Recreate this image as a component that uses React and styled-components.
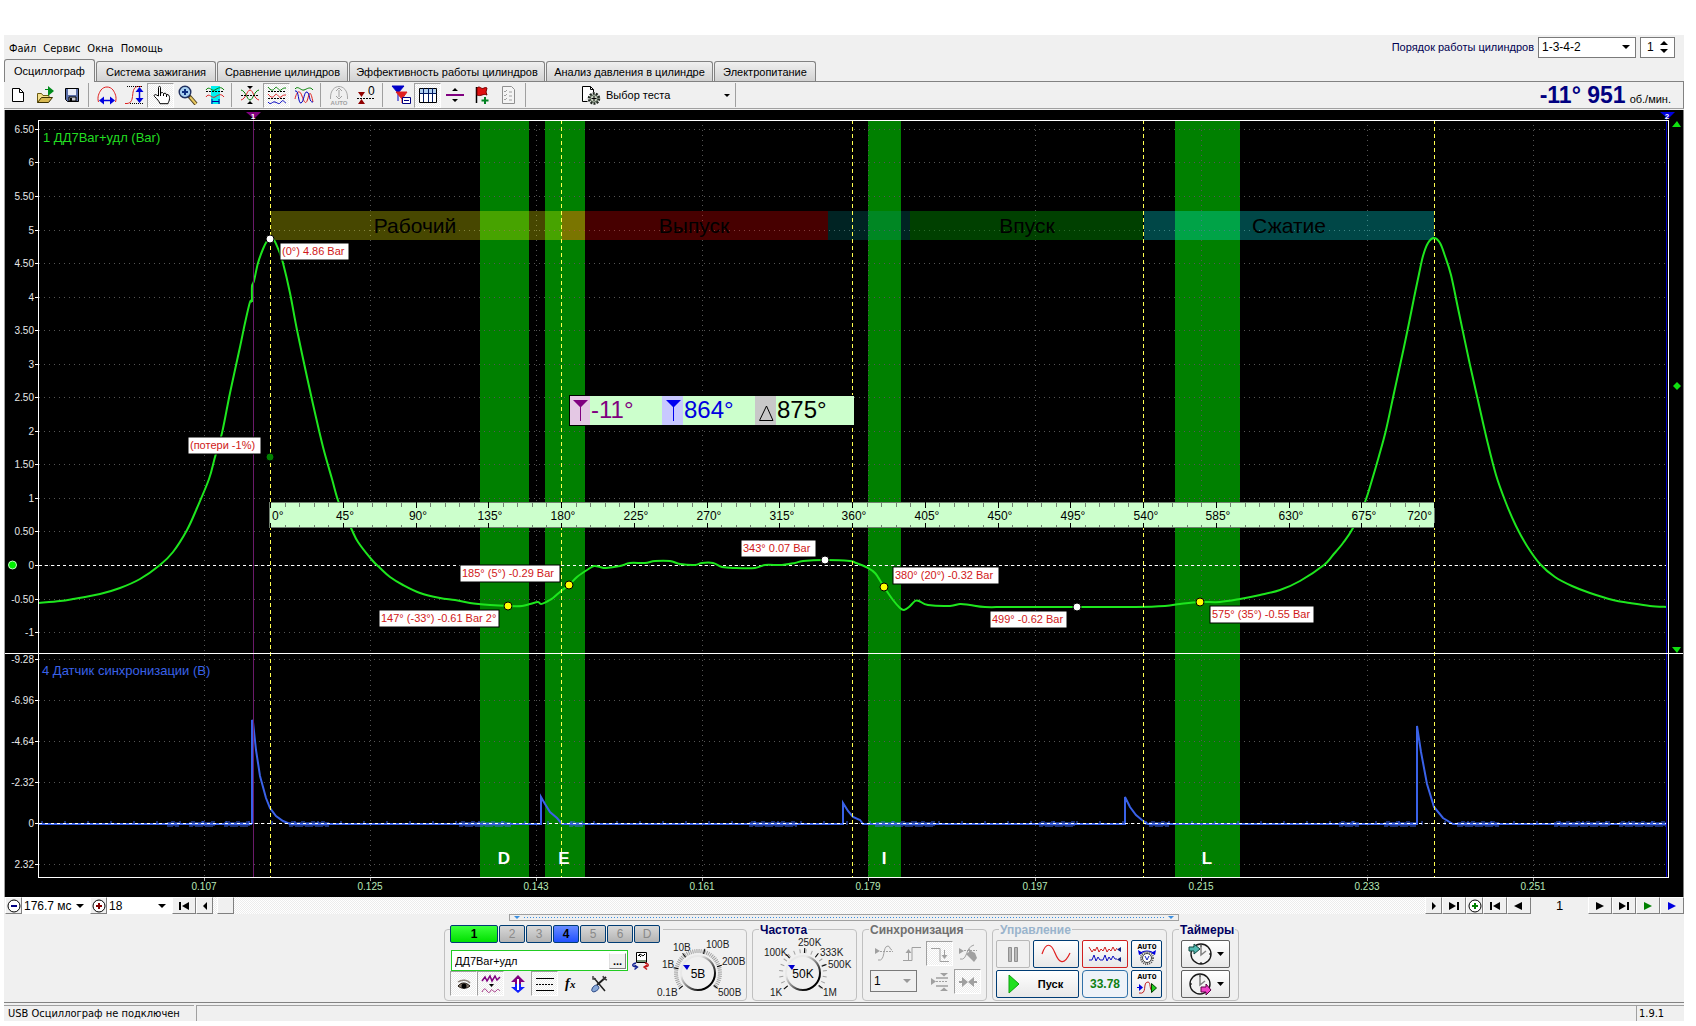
// src/pages/Oscilloscope.jsx
import React from "react";
import styled, { createGlobalStyle, css } from "styled-components";

const UI = `"Liberation Sans", Arial, sans-serif`;
const TAHOMA = `"DejaVu Sans Condensed", "DejaVu Sans", sans-serif`;

// -------- Global --------

const GlobalStyle = createGlobalStyle`
  * { box-sizing: border-box; }
  body {
    margin: 0;
    background: #fff;
    font-family: ${UI};
    font-size: 11px;
    color: #000;
  }
  button, input, select { font: inherit; color: inherit; margin: 0; }
`;

// -------- Styled Components --------

const Page = styled.div`
  padding: 35px 12px 5px 4px;
`;

const Frame = styled.main`
  display: flex;
  flex-direction: column;
  background: #f0f0f0;
`;

const checker = css`
  background: repeating-conic-gradient(#fff 0 25%, #ececec 0 50%) 0 0 / 2px 2px;
`;

const MenuRow = styled.header`
  display: flex;
  justify-content: space-between;
  height: 24px;
  padding: 0 9px 0 5px;
`;

const Menu = styled.nav`
  display: flex;
  align-items: center;
  gap: 7px;
  font-family: ${TAHOMA};
  font-size: 11px;
`;

const MenuItem = styled.button`
  border: 0;
  padding: 3px 0 0;
  background: none;
`;

const Order = styled.div`
  display: flex;
  align-items: center;
  gap: 4px;
  color: #000050;
`;

const ComboWrap = styled.div`
  position: relative;
  width: ${(p) => p.$w}px;
  height: ${(p) => p.$h || 21}px;
  &::after {
    content: "";
    position: absolute;
    right: 6px;
    top: calc(50% - 2px);
    border: 4px solid transparent;
    border-top-color: ${(p) => (p.$muted ? "#999" : "#000")};
    border-bottom: 0;
    pointer-events: none;
  }
`;

const Combo = styled.select`
  appearance: none;
  width: 100%;
  height: 100%;
  padding: ${(p) => (p.$flat ? "0 2px" : "0 3px 1px")};
  border: ${(p) => (p.$flat ? "0" : "1px solid #7a7a7a")};
  border-radius: 0;
  background: ${(p) => (p.$muted ? "#f0f0f0" : "#fff")};
  color: #000;
  opacity: 1;
  font-size: 12px;
`;

const Spin = styled.div`
  display: flex;
  align-items: center;
  width: 35px;
  height: 21px;
  border: 1px solid #7a7a7a;
  background: #fff;
`;

const SpinInput = styled.input`
  width: 18px;
  border: 0;
  padding: 0 0 0 6px;
  background: none;
  color: #000;
  font-size: 12px;
`;

const Tabs = styled.div`
  display: flex;
  align-items: flex-end;
  gap: 1px;
  height: 23px;
  border-bottom: 1px solid #828282;
`;

const Tab = styled.button`
  height: ${(p) => (p.$active ? 23 : 20)}px;
  margin-bottom: ${(p) => (p.$active ? -1 : 0)}px;
  width: ${(p) => p.$w}px;
  padding: 0;
  white-space: nowrap;
  border: 1px solid #828282;
  border-bottom: 0;
  border-radius: 3px 3px 0 0;
  background: ${(p) => (p.$active ? "#f0f0f0" : "linear-gradient(#f0f0f0, #d2d2d2)")};
`;

const Toolbar = styled.div`
  display: flex;
  align-items: center;
  height: 27px;
  border-bottom: 1px solid #a0a0a0;
  border-right: 1px solid #828282;
  margin-bottom: 1px;
`;

const Tool = styled.button`
  display: flex;
  align-items: center;
  justify-content: center;
  width: 27px;
  height: 25px;
  padding: 0;
  border: 1px solid transparent;
  background: none;
  ${(p) =>
    p.$pressed &&
    css`
      ${checker}
      border-color: #a0a0a0 #fff #fff #a0a0a0;
    `}
`;

const Sep = styled.span`
  width: 2px;
  height: 24px;
  margin: 0 3px;
  border-left: 1px solid #a0a0a0;
`;

const TestPick = styled.button`
  display: flex;
  align-items: center;
  gap: 5px;
  width: 151px;
  margin-left: 51px;
  padding: 0;
  border: 0;
  background: none;
`;

const Caret = styled.span`
  margin-left: auto;
  margin-right: 2px;
  border: 3px solid transparent;
  border-top-color: #000;
  border-bottom: 0;
`;

const Rpm = styled.div`
  display: flex;
  align-items: baseline;
  gap: 4px;
  margin-left: auto;
  padding-right: 12px;
`;

const RpmValue = styled.strong`
  font-size: 23px;
  line-height: 26px;
  color: #000080;
`;

const Scope = styled.svg`
  display: block;
  width: 100%;
  height: auto;
  background: #000;
  border-right: 1px solid #828282;
  border-left: 1px solid #a0a0a0;
`;

const ScrollRow = styled.div`
  display: flex;
  height: 17px;
  padding-left: 1px;
  font-size: 13px;
`;

const Track = styled.div`
  flex: 1;
  display: flex;
  gap: 4px;
  ${checker}
`;

const Nav = styled.button`
  display: flex;
  align-items: center;
  justify-content: center;
  width: ${(p) => p.$w || 24}px;
  height: 17px;
  padding: 0;
  border: 1px solid;
  border-color: #fff #808080 #808080 #fff;
  background: #f0f0f0;
`;

const PageNo = styled.output`
  width: 57px;
  text-align: center;
  line-height: 17px;
`;

const Splitter = styled.div`
  display: flex;
  align-items: center;
  align-self: center;
  width: 670px;
  height: 7px;
  padding: 0 4px;
  border: 1px solid #a0a0a0;
`;

const SplitDots = styled.span`
  flex: 1;
  margin: 0 4px;
  height: 1px;
  background: repeating-linear-gradient(90deg, #3a8ee0 0 1px, transparent 1px 3px);
`;

const SplitArrow = styled.span`
  border: 3px solid transparent;
  border-top-color: #3a8ee0;
  border-bottom: 0;
`;

const Deck = styled.section`
  display: flex;
  justify-content: center;
  gap: 5px;
  padding: 8px 5px 1px 0;
`;

const Group = styled.fieldset`
  position: relative;
  width: ${(p) => p.$w}px;
  height: 72px;
  min-width: 0;
  margin: 0;
  padding: 0;
  border: 1px solid #c0c0c0;
  border-radius: 4px;
`;

const Title = styled.legend`
  position: absolute;
  top: -8px;
  left: 6px;
  padding: 0 1px;
  background: #f0f0f0;
  font-weight: bold;
  font-size: 12px;
  line-height: 16px;
  color: ${(p) => p.$c};
`;

const Row = styled.div`
  display: flex;
  align-items: ${(p) => (p.$top ? "flex-start" : "center")};
  gap: ${(p) => p.$gap || 0}px;
`;

const ChannelSide = styled.div`
  display: flex;
  flex-direction: column;
  width: 211px;
  padding-left: 5px;
`;

const Channels = styled(Row)`
  width: 213px;
  height: 25px;
  margin-top: -5px;
  padding-bottom: 7px;
  background: #f0f0f0;
`;

const channelColor = {
  on: "linear-gradient(#3cff3c, #00e000)",
  sel: "linear-gradient(#6a8cff, #2050ff)",
  off: "linear-gradient(#d8d8d8, #b4b4b4)",
};

const Channel = styled.button`
  width: ${(p) => (p.$state === "on" ? 48 : 26)}px;
  height: 18px;
  padding: 0;
  border: 1px solid #003c74;
  border-radius: 2px;
  background: ${(p) => channelColor[p.$state]};
  color: ${(p) => (p.$state === "off" ? "#8a8a8a" : "#000")};
  font-weight: ${(p) => (p.$state === "off" ? "normal" : "bold")};
  font-size: 12px;
`;

const SensorBox = styled.div`
  display: flex;
  align-items: center;
  width: 177px;
  height: 21px;
  margin-left: 1px;
  padding-right: 1px;
  border: 1px solid #22cc22;
  background: #fff;
`;

const SensorInput = styled.input`
  flex: 1;
  min-width: 0;
  border: 0;
  padding: 0 3px;
  background: none;
`;

const Small = styled.button`
  width: 17px;
  height: 16px;
  padding: 0;
  border: 1px solid;
  border-color: #fff #808080 #808080 #e0e0e0;
  background: #f0f0f0;
  line-height: 6px;
  font-weight: bold;
`;

const KnobArt = styled.svg`
  display: block;
  font-size: 10px;
`;

const SyncGrid = styled.div`
  display: grid;
  grid-template-columns: repeat(4, 28px);
  row-gap: 3px;
  padding: 11px 0 0 7px;
`;

const SyncCombo = styled(ComboWrap)`
  grid-column: span 2;
  margin-top: 1px;
`;

const ControlGrid = styled.div`
  display: grid;
  grid-template-columns: 34px 46px 46px 31px;
  gap: 2px 3px;
  padding: 10px 0 0 3px;
`;

const borders = { blue: "#003c74", red: "#d02020", off: "#b8b8b8", gray: "#606060" };

const Cmd = styled.button`
  display: flex;
  align-items: center;
  justify-content: center;
  height: 28px;
  padding: 0;
  border: 1px solid ${(p) => borders[p.$tone || "blue"]};
  border-radius: 2px;
  background: ${(p) => (p.$tone === "off" ? "#f0f0f0" : "linear-gradient(#fff, #e8e8e8)")};
`;

const StartCmd = styled(Cmd)`
  grid-column: span 2;
  gap: 18px;
  padding-right: 4px;
  font-weight: bold;
`;

const Rate = styled.output`
  display: flex;
  align-items: center;
  justify-content: center;
  height: 28px;
  border: 1px solid #3070a8;
  border-radius: 4px;
  background: #eef2f8;
  color: #108010;
  font-weight: bold;
  font-size: 12px;
`;

const Timers = styled.div`
  display: flex;
  flex-direction: column;
  gap: 2px;
  width: 57px;
  padding: 10px 0 0 8px;
`;

const TimerCmd = styled(Cmd)`
  gap: 5px;
`;

const Status = styled.footer`
  display: flex;
  height: 19px;
  border-top: 1px solid #828282;
  padding-top: 2px;
  font-family: ${TAHOMA};
  font-size: 11px;
  line-height: 16px;
`;

const StatusCell = styled.span`
  width: ${(p) => p.$w}px;
  padding-left: ${(p) => (p.$line ? 2 : 4)}px;
  border-top: 1px solid #a0a0a0;
  ${(p) => p.$grow && "flex: 1; border-left: 1px solid #a0a0a0; margin-left: 2px;"}
  ${(p) => p.$line && "border-left: 1px solid #a0a0a0;"}
`;

// -------- Icons --------

function Ico({ children, w = 20, h = 20 }) {
  return (
    <svg width={w} height={h} viewBox={`0 0 ${w} ${h}`} fill="none" aria-hidden="true">
      {children}
    </svg>
  );
}

const icons = {
  fresh: (
    <Ico>
      <path d="M4.500 3.500h7l4 4v9h-11z" fill="#fff" stroke="#000" />
      <path d="M11.500 3.500v4h4" stroke="#000" />
    </Ico>
  ),
  open: (
    <Ico>
      <path d="M2.500 17.500v-9h4l1.500 2h6v3" fill="#f4e08c" stroke="#6b5a10" />
      <path d="M2.500 17.500l4-5h11l-4 5z" fill="#d8b850" stroke="#3a3000" />
      <path d="M13 1l6 5-6 5z" fill="#008a1c" />
      <path d="M10 4.500h3" stroke="#008a1c" />
    </Ico>
  ),
  save: (
    <Ico>
      <path d="M3.500 3.500h13v13h-11l-2-2z" fill="#5a6ea8" stroke="#000" />
      <path d="M6 4h8v6H6z" fill="#e8ecf8" />
      <path d="M7 12h7v4H7z" fill="#c8c8d0" stroke="#000" />
      <path d="M8 13h2v3H8z" fill="#000" />
    </Ico>
  ),
  arch: (
    <Ico>
      <path d="M1.500 17C0 12 2 8 4 5c3-4 9-4 12 0 2 3 4 7 2.500 12" stroke="#e02020" />
      <path d="M5 15.500h10" stroke="#0000e0" strokeWidth="1.500" />
      <path d="M2 15.500l5-4v8zM18 15.500l-5-4v8z" fill="#0000e0" />
    </Ico>
  ),
  rise: (
    <Ico>
      <path d="M1 18.500c12 1 4-14 12-17h5" stroke="#e02020" />
      <path d="M3 1.500h16M6 18.500h13" stroke="#000" strokeDasharray="1 1" />
      <path d="M15.500 5v10" stroke="#0000e0" strokeWidth="1.500" />
      <path d="M15.500 2l4 5h-8zM15.500 18l4-5h-8z" fill="#0000e0" />
    </Ico>
  ),
  hand: (
    <Ico>
      <path
        d="M7.500 11V2.500c0-1.500 2-1.500 2 0V8l2-.5 1 1 2-.3.700 1.300 1.800.2c1.500.8 1.500 2 1.500 4 0 2-1 3-1.500 5h-8C8 16 6 14 3.500 11.500c-1-1.500.5-2.500 2-1.500z"
        fill="#fff"
        stroke="#000"
      />
      <path d="M9.500 8v3M12.500 9v2M15.500 10v2" stroke="#000" />
    </Ico>
  ),
  zoom: (
    <Ico>
      <path d="M11 11l7 8" stroke="#504020" strokeWidth="4" />
      <path d="M12 12l6 7" stroke="#e8c860" strokeWidth="2" />
      <circle cx="7" cy="7" r="5.800" fill="#a8d0f0" stroke="#203060" strokeWidth="1.400" />
      <path d="M7 4v6M4 7h6" stroke="#103080" strokeWidth="2" />
    </Ico>
  ),
  fit: (
    <Ico>
      <path d="M6 1h9v18H6z" fill="#00f0f0" />
      <path d="M1 5c3-5 6 2 9 0s6-4 9 0" stroke="#008000" />
      <path d="M1 6.500h18" stroke="#000" strokeDasharray="2 1" />
      <path d="M1 12c3-5 6 2 9 0s6-4 9 0" stroke="#e02020" />
      <path d="M7 16.500h7M7 14v5M14 14v5" stroke="#0000a0" />
    </Ico>
  ),
  cross: (
    <Ico>
      <path d="M1 5c5 1 6 10 9 10s4-9 9-10" stroke="#008000" />
      <path d="M1 15c5-1 6-10 9-10s4 9 9 10" stroke="#e02020" />
      <path d="M1 10.500h18" stroke="#000" strokeDasharray="2 1" />
      <path d="M7 1h6l-3 3zM7 19h6l-3-3z" fill="#000" />
    </Ico>
  ),
  split: (
    <Ico>
      <path d="M1 2c3 4 5 4 7 1s4 4 6 2 3-2 5-2" stroke="#008000" />
      <path d="M1 6.500h18M1 13.500h18" stroke="#000" strokeDasharray="2 1" />
      <path d="M1 9c3 4 5 4 7 1s4 4 6 2 3-2 5-2" stroke="#e02020" />
      <path d="M1 17c3 4 4-1 7 0s4 3 6 0 3 0 5 1" stroke="#0000c0" />
    </Ico>
  ),
  overlay: (
    <Ico>
      <path d="M1 4c3-4 6 2 9 1s6-4 9 0" stroke="#008000" />
      <path d="M1 14C3 5 6 5 8 11s4 10 6 2 3-5 5 4" stroke="#e02020" />
      <path d="M1 6c4-2 3 13 6 12S10 6 13 7s2 11 6 10" stroke="#0000c0" />
    </Ico>
  ),
  auto: (
    <Ico>
      <path d="M1.500 14C1 5 6 1.500 10 1.500S19 5 18.500 14" stroke="#a8a8a8" />
      <path d="M10 5v7M7 6l3-3 3 3M7 11l3 3 3-3" stroke="#a0a0a0" />
      <text x="10" y="20" textAnchor="middle" fontSize="6" fontWeight="bold" fill="#a0a0a0">AUTO</text>
    </Ico>
  ),
  zero: (
    <Ico>
      <path d="M2 7h7l-3.500 5zM2 19h7l-3.500-5z" fill="#900000" />
      <path d="M1 13.500h18" stroke="#000" strokeDasharray="2 1" />
      <text x="12" y="10" fontSize="12" fill="#000">0</text>
    </Ico>
  ),
  markers: (
    <Ico>
      <path d="M1 1h12L7 8zM7 7v9" fill="#0000c8" stroke="#0000c8" />
      <path d="M5 7h11l-5 7zM11 13v5" fill="#e02020" stroke="#e02020" />
      <path d="M11.500 12.500h8v6h-8z" fill="#fff" stroke="#000080" />
      <path d="M13 15.500h5" stroke="#000080" />
    </Ico>
  ),
  grid: (
    <Ico>
      <path d="M1.500 3.500h17v14h-17z" fill="#fff" stroke="#000" />
      <path d="M2 4h16v4H2z" fill="#b0d0f0" />
      <path d="M1.500 8.500h17M5.500 3v14M10.500 3v14M14.500 3v14" stroke="#001860" />
    </Ico>
  ),
  level: (
    <Ico>
      <path d="M1 10h18" stroke="#800080" strokeWidth="2" />
      <path d="M7 6h6l-3-3zM7 14h6l-3 3z" fill="#000" />
    </Ico>
  ),
  flag: (
    <Ico>
      <path d="M4.500 2v16" stroke="#000" strokeWidth="1.500" />
      <path d="M5 3c3-3 4 2 7 0 2-1 3 0 3 0l-1 4 1 3c-4-2-6 2-10 0z" fill="#e01010" stroke="#700" />
      <path d="M13 12v7M9.500 15.500h7" stroke="#008020" strokeWidth="2" />
    </Ico>
  ),
  list: (
    <Ico>
      <path d="M3.500 1.500h9l3 3v14h-12z" fill="#f4f4f4" stroke="#909090" />
      <path d="M5 6l1 1 2-2M5 10l1 1 2-2M5 14l1 1 2-2M10 7h3M10 11h3M10 15h3" stroke="#a0a0a0" />
    </Ico>
  ),
  test: (
    <Ico>
      <path d="M1.500 16.500v-15h8l3 3v3M1.500 16.500h5" fill="#fff" stroke="#000" />
      <path d="M9.500 1.500v3h3" stroke="#000" />
      <circle cx="13" cy="13.500" r="5" stroke="#202820" strokeWidth="2.500" strokeDasharray="2 1.100" />
      <circle cx="13" cy="13.500" r="3.800" fill="#c8d0c0" stroke="#405040" />
      <path d="M13 11v5M10.500 13.500h5" stroke="#000" />
    </Ico>
  ),
  swap: (
    <Ico>
      <path d="M5.500 1.500h10v10h-10z" fill="#fff" stroke="#000" />
      <path d="M6 9h9v2H6z" fill="#7a9a7a" />
      <path d="M7 5l2-2 3 2 2-2M10 6l-2-2" stroke="#000" />
      <path d="M5 12c-5 1-4 4 1 4M3.500 14l3 2-3 2.500" stroke="#102090" strokeWidth="1.400" />
      <path d="M14 12c5 1 4 4-1 4M16 14l-3 2 3 2.500" stroke="#c01818" strokeWidth="1.400" />
    </Ico>
  ),
  eye: (
    <Ico>
      <path d="M4 8c4-3 10-2 12 1" stroke="#8a8078" strokeWidth="1.500" />
      <path d="M4 12c3-4 8-4 12 0-3 3-9 3-12 0z" fill="#807468" stroke="#201810" />
      <circle cx="10" cy="12" r="2.500" fill="#000" />
    </Ico>
  ),
  noise: (
    <Ico>
      <path d="M1 7l3-4 2 4 3-5 2 5 3-5 2 4 3-3" stroke="#800080" strokeWidth="1.500" />
      <path d="M8 10h5l-2.500 3z" fill="#000" />
      <path d="M1 18c2-4 3-4 5-1s3 1 4-1 3 4 5 1 3-1 4 0" stroke="#a03080" />
    </Ico>
  ),
  updown: (
    <Ico>
      <path d="M10 1l7 7h-4v3H7V8H3z" fill="#800080" />
      <path d="M10 19l7-6h-4v-3H7v3H3z" fill="#1020ff" />
      <path d="M10 5v11" stroke="#fff" strokeWidth="2" />
    </Ico>
  ),
  lines: (
    <Ico>
      <path d="M1 4.500h18M1 16.500h18" stroke="#000" />
      <path d="M1 10.500h18" stroke="#000" strokeDasharray="2 1" />
    </Ico>
  ),
  fx: (
    <Ico>
      <text x="3" y="14" fontSize="14" fontStyle="italic" fontWeight="bold" fontFamily="Liberation Serif" fill="#000">f</text>
      <text x="8" y="14" fontSize="11" fontStyle="italic" fontWeight="bold" fontFamily="Liberation Serif" fill="#000">x</text>
    </Ico>
  ),
  tools: (
    <Ico>
      <path d="M5 4l11 13" stroke="#202020" strokeWidth="1.500" />
      <path d="M17 3l-9 8" stroke="#202020" strokeWidth="2" />
      <path d="M4 2v3h3M14 2l1 3 3 1" stroke="#404040" strokeWidth="1.500" />
      <path d="M3 15c1-3 4-5 6-3s0 4-2 5c-3 2-5 0-4-2z" fill="#88a8d8" stroke="#204080" />
    </Ico>
  ),
  trigWave: (
    <Ico>
      <path d="M1 4v6l5-3z" fill="#a0a0a0" />
      <path d="M6 7.500h13" stroke="#a0a0a0" strokeDasharray="2 1" />
      <path d="M4 16c8 2 4-14 10-14 2 0 2 4 4 4" stroke="#a0a0a0" />
    </Ico>
  ),
  trigRise: (
    <Ico>
      <path d="M1 16.500h9v-13h9" stroke="#a0a0a0" />
      <path d="M6.500 16V8" stroke="#a0a0a0" />
      <path d="M3.500 9h6l-3-4z" fill="#a0a0a0" />
    </Ico>
  ),
  trigFall: (
    <Ico>
      <path d="M1 4.500h9v13h9" stroke="#a0a0a0" />
      <path d="M14.500 6v6" stroke="#a0a0a0" />
      <path d="M11.500 11h6l-3 4z" fill="#a0a0a0" />
    </Ico>
  ),
  trigHand: (
    <Ico>
      <path d="M1 4v6l5-3z" fill="#a0a0a0" />
      <path d="M6 6.500h13" stroke="#a0a0a0" strokeDasharray="2 1" />
      <path d="M2 15c8 2 5-12 14-14" stroke="#a0a0a0" />
      <path d="M8 10l3-2V4l2 3 4 2 2 5-3 4z" fill="#a0a0a0" />
    </Ico>
  ),
  trigGap: (
    <Ico>
      <path d="M1 6v7l5-3.500zM10 1h8l-4 3.500zM10 19h8l-4-3.500z" fill="#a0a0a0" />
      <path d="M6 6h12M6 14h12" stroke="#a0a0a0" strokeWidth="1.500" />
      <path d="M6 9.500h12" stroke="#a0a0a0" strokeDasharray="2 1" />
    </Ico>
  ),
  trigIn: (
    <Ico>
      <path d="M1 10h5M14 10h5" stroke="#a0a0a0" strokeWidth="2" />
      <path d="M4 5l6 5-6 5zM16 5l-6 5 6 5z" fill="#a0a0a0" />
    </Ico>
  ),
  pause: (
    <Ico>
      <path d="M5.500 3.500h3v14h-3zM11.500 3.500h3v14h-3z" fill="#b8b8b8" stroke="#909090" />
    </Ico>
  ),
  sine: (
    <Ico w={30} h={20}>
      <path d="M1 10C5-2 10-1 14 9s9 13 15 0" stroke="#e02020" strokeWidth="1.200" />
    </Ico>
  ),
  traces: (
    <Ico w={34} h={20}>
      <path d="M1 3l3 5 2-3 1 2 2-4 2 5 2-3 2 2 2-4 2 5 2-3 2 2 2-4 2 4 2-3" stroke="#d02020" />
      <path d="M1 16h3l2-5 2 6 2-4 2 3h3l2-5 2 6 2-4 2 3 2-4 2 3h2" stroke="#1010c0" />
      <path d="M33 3v5l-4-2.500zM33 13v5l-4-2.500z" fill="#102080" />
    </Ico>
  ),
  autoDial: (
    <Ico w={22} h={24}>
      <text x="11" y="7" textAnchor="middle" fontSize="8" fontFamily="Liberation Mono" fontWeight="bold" fill="#000">AUTO</text>
      <path d="M4 12c3-4 11-4 14 0" stroke="#0000e0" strokeWidth="1.200" />
      <path d="M2 8l5 3-4 2zM20 8l-5 3 4 2z" fill="#0000e0" />
      <circle cx="11" cy="16" r="6" stroke="#505050" strokeWidth="2" strokeDasharray="1 1" />
      <circle cx="11" cy="16" r="4.500" fill="#fff" stroke="#404040" />
      <path d="M9 14l2 4 2-4" stroke="#1020c0" />
    </Ico>
  ),
  autoSync: (
    <Ico w={22} h={24}>
      <text x="11" y="7" textAnchor="middle" fontSize="8" fontFamily="Liberation Mono" fontWeight="bold" fill="#000">AUTO</text>
      <path d="M1 15.500h3" stroke="#0000e0" />
      <path d="M3 12v7l4-3.500z" fill="#0000e0" />
      <path d="M3 21c9 2 3-11 9-11 3 0 1 8 5 10" stroke="#c02020" />
      <path d="M15.500 11.500v9l5-4.500z" fill="#20d020" stroke="#004000" />
    </Ico>
  ),
  timerIn: (
    <Ico w={24} h={24}>
      <circle cx="13" cy="12" r="10" fill="#f4f4f4" stroke="#181818" strokeWidth="1.400" />
      <path d="M13 5v8l5-4" stroke="#808080" strokeWidth="1.500" />
      <path d="M13 3v2M13 20v2M21 12h2" stroke="#000" />
      <path d="M1 5h5V2l6 5-6 5V9H1z" fill="#50b8b0" stroke="#104840" />
    </Ico>
  ),
  timerOut: (
    <Ico w={24} h={24}>
      <circle cx="12" cy="12" r="10" fill="#f4f4f4" stroke="#181818" strokeWidth="1.400" />
      <path d="M12 5v8l5-4" stroke="#808080" strokeWidth="1.500" />
      <path d="M12 3v2M2 12h2" stroke="#000" />
      <path d="M13 15h5v-3l5 6-5 5v-3h-5z" fill="#f040c8" stroke="#600048" />
    </Ico>
  ),
};

function NavIcon({ kind, color = "#000" }) {
  const shapes = {
    play: <path d="M1 1v8l8-4z" fill={color} />,
    back: <path d="M8 1v8L0 5z" fill={color} />,
    small: <path d="M3 1v8l4-4z" fill={color} />,
    smallBack: <path d="M7 1v8L3 5z" fill={color} />,
    first: <path d="M10 1v8L3 5zM0 1h2v8H0z" fill={color} />,
    last: <path d="M0 1v8l7-4zM8 1h2v8H8z" fill={color} />,
  };
  return (
    <Ico w={10} h={10}>
      {shapes[kind]}
    </Ico>
  );
}

function ZoomDot({ plus, color }) {
  return (
    <Ico w={14} h={14}>
      <circle cx="7" cy="7" r="6" fill="#fff" stroke="#000" />
      <path d={plus ? "M7 4v6M4 7h6" : "M4 7h6"} stroke={color} strokeWidth="2" />
    </Ico>
  );
}

// -------- Scope data --------

// the trace has a small jump at the cylinder mark, so it is drawn as two runs
const PRESSURE = [
  [
    [39, 603], [60, 601], [73, 599], [100, 594], [120, 588], [140, 579], [160, 565], [173, 552], [187, 530],
    [197, 508], [209, 479], [215, 457], [222, 433], [230, 393], [240, 347], [245, 323], [250, 302], [252, 302],
  ],
  [
    [252, 302], [252, 286], [254, 281], [258, 263], [263, 249], [267, 241], [270, 238], [274, 240], [279, 251],
    [283, 263], [290, 293], [297, 330], [307, 377], [315, 413], [323, 447], [332, 479], [339, 503], [351, 528],
    [358, 542], [372, 560], [380, 568], [390, 577], [403, 585], [420, 593], [440, 598], [455, 600], [470, 603],
    [490, 605], [508, 606], [522, 606], [530, 604], [538, 602], [541, 604], [548, 601], [553, 598], [561, 591],
    [569, 585], [577, 577], [587, 570], [594, 566], [600, 567], [606, 568], [620, 566], [630, 563], [645, 563],
    [655, 561], [670, 561], [680, 564], [695, 565], [702, 563], [713, 563], [722, 567], [735, 568], [755, 568],
    [765, 565], [782, 565], [795, 563], [803, 561], [825, 560], [850, 561], [856, 563], [866, 567], [875, 573],
    [884, 587], [893, 600], [900, 608], [904, 610], [909, 607], [915, 601], [919, 601], [928, 605], [950, 606],
    [960, 604], [970, 605], [985, 607], [1010, 607], [1077, 607], [1135, 607], [1165, 606], [1180, 604],
    [1200, 602], [1220, 602], [1240, 599], [1260, 595], [1280, 590], [1300, 581], [1324, 565], [1333, 555],
    [1343, 543], [1353, 528], [1365, 502], [1372, 480], [1379, 456], [1386, 430], [1394, 393], [1404, 347],
    [1409, 323], [1414, 298], [1419, 274], [1423, 256], [1428, 243], [1434, 238], [1440, 243], [1445, 256],
    [1451, 275], [1459, 313], [1470, 365], [1479, 405], [1487, 440], [1496, 475], [1506, 503], [1516, 526],
    [1527, 546], [1540, 564], [1555, 577], [1572, 586], [1590, 593], [1613, 600], [1630, 603], [1650, 606],
    [1667, 607],
  ],
];

const SYNC = [
  [252, 824], [252, 720], [253, 722], [256, 750], [260, 776], [266, 798], [270, 808], [276, 816], [283, 821],
  [290, 824], [541, 824], [541, 797], [545, 804], [550, 812], [557, 818], [562, 824], [843, 824], [843, 803],
  [848, 811], [853, 817], [860, 820], [863, 824], [1125, 824], [1125, 797], [1130, 807], [1136, 815],
  [1142, 820], [1148, 824], [1417, 824], [1417, 726], [1421, 752], [1427, 784], [1434, 807], [1443, 818],
  [1453, 824], [1667, 824],
];

const NOISY = [
  [168, 180], [190, 215], [225, 251], [290, 330], [460, 512], [570, 583], [750, 798], [876, 935],
  [1040, 1075], [1150, 1170], [1340, 1360], [1385, 1417], [1458, 1500], [1555, 1610], [1620, 1667],
];

const RAW_STEPS = Array.from({ length: 16 }, (_, i) => 6.5 - i * 0.5);
const CYCLES = [270, 561, 852, 1143, 1434];
const TIMES = ["0.107", "0.125", "0.143", "0.161", "0.179", "0.197", "0.215", "0.233", "0.251"];
const LOW = [["-9.28", 659], ["-6.96", 700], ["-4.64", 741], ["-2.32", 782], ["0", 823], ["2.32", 864]];
const ZONES = [["D", 480, 49, 504], ["E", 545, 40, 564], ["I", 868, 33, 884], ["L", 1175, 65, 1207]];
const STROKES = [
  ["Рабочий", 271, 314, "rgba(255,255,0,0.28)", 415],
  ["Выпуск", 562, 266, "rgba(255,0,0,0.28)", 694],
  ["", 828, 82, "rgba(0,160,160,0.22)", 860],
  ["Впуск", 910, 233, "rgba(0,128,0,0.5)", 1027],
  ["Сжатие", 1144, 290, "rgba(0,255,255,0.28)", 1289],
];

const CALLOUTS = [
  ["(0°) 4.86 Bar", 280, 243, 69],
  ["(потери -1%)", 188, 437, 73],
  ["185° (5°) -0.29 Bar", 460, 565, 100],
  ["147° (-33°) -0.61 Bar 2°", 379, 610, 120],
  ["343° 0.07 Bar", 741, 540, 75],
  ["380° (20°) -0.32 Bar", 893, 567, 106],
  ["499° -0.62 Bar", 990, 611, 77],
  ["575° (35°) -0.55 Bar", 1210, 606, 104],
];

const POINTS = [
  [270, 239, "#fff"], [270, 457, "#008000"], [508, 606, "#ff0"], [569, 585, "#ff0"],
  [825, 560, "#fff"], [884, 587, "#ff0"], [1077, 607, "#fff"], [1200, 602, "#ff0"],
];

function toPath(points) {
  return "M" + points.map((p) => p.join(" ")).join("L");
}

function toSmoothPath(points) {
  let d = `M${points[0].join(" ")}`;
  for (let i = 0; i < points.length - 1; i++) {
    const [ax, ay] = points[i - 1] || points[i];
    const [bx, by] = points[i];
    const [cx, cy] = points[i + 1];
    const [dx, dy] = points[i + 2] || points[i + 1];
    d += `C${bx + (cx - ax) / 6} ${by + (cy - ay) / 6} ${cx - (dx - bx) / 6} ${cy - (dy - by) / 6} ${cx} ${cy}`;
  }
  return d;
}

function noisePath() {
  let d = "";
  NOISY.forEach(([from, to]) => {
    for (let x = from; x < to; x += 2) {
      const h = (x * 7) % 5;
      d += `M${x} ${822 - (h > 2 ? 1 : 0)}v${5 + (h > 3 ? 1 : 0)}`;
    }
  });
  for (let x = 42; x < 1660; x += 23) d += `M${x} 821v4`;
  return d;
}

// -------- Scope --------

function Graph() {
  return (
    <Scope viewBox="5 110 1678 787" role="img" aria-label="Осциллограмма" fontFamily="Liberation Sans" fontSize="11">
      {ZONES.map(([name, x, w]) => (
        <rect key={name} x={x} y="121" width={w} height="756" fill="#008000" />
      ))}

      <g stroke="#555" strokeDasharray="1 4" shapeRendering="crispEdges">
        {RAW_STEPS.map((v) => (
          <path key={v} d={`M39 ${Math.round(565 - v * 67.1) + 0.5}H1667`} />
        ))}
        {LOW.map(([v, y]) => (
          <path key={v} d={`M39 ${y + 0.5}H1667`} />
        ))}
        {TIMES.map((t, i) => (
          <path key={t} d={`M${Math.round(204 + i * 166.1) + 0.5} 125V877`} />
        ))}
      </g>

      {STROKES.map(([name, x, w, fill, cx]) => (
        <g key={x}>
          <rect x={x} y="211" width={w} height="29" fill={fill} />
          <text x={cx} y="233" fontSize="21" textAnchor="middle" fill="#000">{name}</text>
        </g>
      ))}

      <path d="M39 565.500H1667" stroke="#fff" strokeDasharray="3 3" shapeRendering="crispEdges" />

      {PRESSURE.map((run, i) => (
        <path key={i} d={toSmoothPath(run)} fill="none" stroke="#1ee61e" strokeWidth="2" strokeLinejoin="round" />
      ))}
      <g fill="none" stroke="#3a62e8">
        <path d="M39 824H252M290 824H541" strokeWidth="2" />
        <path d={toPath(SYNC)} strokeWidth="2" />
        <path d={noisePath()} strokeWidth="1" />
      </g>
      <path d="M39 823.500H1667" stroke="#fff" strokeDasharray="3 3" shapeRendering="crispEdges" />

      <g stroke="#ffff50" strokeDasharray="4 3" shapeRendering="crispEdges">
        {CYCLES.map((x) => (
          <path key={x} d={`M${x + 0.5} 120V877`} />
        ))}
      </g>
      <path d="M253.500 117V877" stroke="#6a1a6a" />
      <path d="M1666.500 117V877" stroke="#0000c0" />
      <path d="M246 112h15l-7 7z" fill="#800080" />
      <path d="M1660 112h15l-7 7z" fill="#0000e0" />
      <text x="253" y="119" fontSize="8" fontWeight="bold" textAnchor="middle" fill="#fff">1</text>
      <text x="1667" y="119" fontSize="8" fontWeight="bold" textAnchor="middle" fill="#fff">2</text>

      <path
        d="M38.500 877V120.500H1668.500V877.500H38M5 653.500H1683"
        fill="none"
        stroke="#fff"
        shapeRendering="crispEdges"
      />

      <g fill="#e8e8e8" textAnchor="end" fontSize="10">
        {RAW_STEPS.map((v) => {
          const y = Math.round(565 - v * 67.1);
          return (
            <g key={v}>
              <text x="34" y={y + 4}>{Number.isInteger(v) ? v : v.toFixed(2)}</text>
              <path d={`M35 ${y}h3v1h-3z`} fill="#fff" />
            </g>
          );
        })}
        {LOW.map(([v, y]) => (
          <g key={v}>
            <text x="34" y={y + 4}>{v}</text>
            <path d={`M35 ${y}h3v1h-3z`} fill="#fff" />
          </g>
        ))}
      </g>
      <g fill="#b8e8b8" textAnchor="middle" fontSize="10">
        {TIMES.map((t, i) => {
          const x = Math.round(204 + i * 166.1);
          return (
            <g key={t}>
              <text x={x} y="890">{t}</text>
              <path d={`M${x} 878h1v3h-1z`} fill="#aaa" />
            </g>
          );
        })}
      </g>

      <text x="43" y="142" fontSize="13" fill="#22dd22">1 ДД7Bar+удл (Bar)</text>
      <text x="42" y="675" fontSize="13" fill="#3a62e8">4 Датчик синхронизации (В)</text>

      <g>
        <rect x="269.500" y="502.500" width="1165" height="25" fill="#ccffcc" stroke="#708070" />
        {Array.from({ length: 81 }, (_, i) => {
          const x = Math.round(270 + i * 14.55);
          const major = i % 5 === 0;
          return (
            <path
              key={i}
              d={major ? `M${x + 0.5} 502v6M${x + 0.5} 523v5` : `M${x + 0.5} 503v4M${x + 0.5} 525v3`}
              stroke={major ? "#000" : "#708070"}
            />
          );
        })}
        {Array.from({ length: 17 }, (_, i) => (
          <text
            key={i}
            x={i === 0 ? 272 : i === 16 ? 1432 : Math.round(272 + i * 72.8)}
            y="520"
            fontSize="12"
            textAnchor={i === 0 ? "start" : i === 16 ? "end" : "middle"}
          >
            {i * 45}°
          </text>
        ))}
      </g>

      <g>
        <rect x="569" y="395" width="285" height="31" fill="#000" />
        <rect x="570" y="396" width="284" height="29" fill="#ccffcc" />
        <rect x="570" y="396" width="20" height="29" fill="#e4c8e4" />
        <rect x="662" y="396" width="21" height="29" fill="#c8c8ff" />
        <rect x="755" y="396" width="21" height="29" fill="#c8c8c8" />
        <path d="M573 400h15l-7 7v14h-1v-14z" fill="#800080" />
        <path d="M666 400h15l-7 7v14h-1v-14z" fill="#0000f0" />
        <path d="M766.500 406L773 420.500H759.500z" fill="none" stroke="#000" />
        <text x="591" y="418" fontSize="24" fill="#800080">-11°</text>
        <text x="684" y="418" fontSize="24" fill="#0000e0">864°</text>
        <text x="777" y="418" fontSize="24" fill="#000">875°</text>
      </g>

      {CALLOUTS.map(([label, x, y, w]) => (
        <g key={label}>
          <rect x={x} y={y} width={w} height="17" fill="#fff" stroke="#000" />
          <text x={x + 2} y={y + 12} fill="#d01818">{label}</text>
        </g>
      ))}

      {POINTS.map(([x, y, fill]) => (
        <circle key={`${x}-${y}`} cx={x} cy={y} r="4" fill={fill} stroke="#000" />
      ))}
      <circle cx="12.500" cy="565" r="4" fill="#00f000" stroke="#c0ffc0" />
      <path d="M1672 127h9l-4-6zM1677 382l4 4-4 4-4-4zM1672 647h9l-4 6z" fill="#10e010" />

      {ZONES.map(([name, , , cx]) => (
        <text key={name} x={cx} y="864" fontSize="17" fontWeight="bold" textAnchor="middle" fill="#fff">{name}</text>
      ))}
    </Scope>
  );
}

// -------- Knobs --------

function Knob({ id, w, cx, value, labels, ticks, mark }) {
  const arc = Array.from({ length: ticks }, (_, i) => 140 + (i * 260) / (ticks - 1));
  return (
    <KnobArt width={w} height="70" viewBox={`0 0 ${w} 70`} role="img" aria-label={value}>
      <defs>
        <linearGradient id={id} x1="0" y1="0" x2="1" y2="1">
          <stop offset="0.3" stopColor="#e8e8e8" />
          <stop offset="0.8" stopColor="#000" />
        </linearGradient>
      </defs>
      {arc.map((a) => (
        <path key={a} d="M20 0h4" stroke="#a0a0a0" transform={`translate(${cx} 43) rotate(${a})`} />
      ))}
      {labels.map(([t, , , a]) => (
        <path key={t} d="M20 0h5" stroke="#000" transform={`translate(${cx} 43) rotate(${a})`} />
      ))}
      <circle cx={cx} cy="43" r="17" fill="#f0f0f0" stroke={`url(#${id})`} strokeWidth="2" />
      <path d={`M${mark} 35h7l-3 5z`} fill="#0000d0" />
      <text x={cx} y="48" fontSize="12" textAnchor="middle">{value}</text>
      {labels.map(([t, x, y]) => (
        <text key={t} x={x} y={y} fill="#202020">{t}</text>
      ))}
    </KnobArt>
  );
}

// -------- Component --------

const TABS = [
  ["Осциллограф", 91],
  ["Система зажигания", 120],
  ["Сравнение цилиндров", 131],
  ["Эффективность работы цилиндров", 196],
  ["Анализ давления в цилиндре", 167],
  ["Электропитание", 102],
];

const TOOLS = [
  ["Новый", "fresh"], ["Открыть", "open"], ["Сохранить", "save"], null,
  ["Период", "arch"], ["Амплитуда", "rise"], ["Рука", "hand", true], ["Масштаб", "zoom"], ["Вписать", "fit"], null,
  ["Центр", "cross"], ["Разделить", "split", true], ["Совместить", "overlay"], null,
  ["Авто", "auto"], ["Ноль", "zero"], null,
  ["Маркеры", "markers"], ["Таблица", "grid", true], ["Уровень", "level"], ["Флаг", "flag"], ["Список", "list"], null,
];

export default function App() {
  return (
    <>
      <GlobalStyle />
      <Page>
        <Frame>
          <MenuRow>
            <Menu>
              <MenuItem>Файл</MenuItem>
              <MenuItem>Сервис</MenuItem>
              <MenuItem>Окна</MenuItem>
              <MenuItem>Помощь</MenuItem>
            </Menu>
            <Order>
              <label htmlFor="order">Порядок работы цилиндров</label>
              <ComboWrap $w={98}>
                <Combo id="order" defaultValue="a">
                  <option value="a">1-3-4-2</option>
                </Combo>
              </ComboWrap>
              <Spin>
                <SpinInput aria-label="Цилиндр" defaultValue="1" />
                <Ico w={10} h={16}>
                  <path d="M1 6h8L5 2zM1 10h8l-4 4z" fill="#000" />
                </Ico>
              </Spin>
            </Order>
          </MenuRow>

          <Tabs role="tablist">
            {TABS.map(([t, w], i) => (
              <Tab key={t} role="tab" aria-selected={i === 0} $active={i === 0} $w={w}>{t}</Tab>
            ))}
          </Tabs>

          <Toolbar>
            {TOOLS.map((tool, i) =>
              tool ? (
                <Tool key={i} aria-label={tool[0]} $pressed={tool[2]}>{icons[tool[1]]}</Tool>
              ) : (
                <Sep key={i} />
              )
            )}
            <TestPick>
              {icons.test}
              Выбор теста
              <Caret />
            </TestPick>
            <Sep />
            <Rpm>
              <RpmValue>-11° 951</RpmValue>
              <span>об./мин.</span>
            </Rpm>
          </Toolbar>

          <Graph />

          <ScrollRow>
            <Nav $w={17} aria-label="Уменьшить"><ZoomDot color="#000080" /></Nav>
            <ComboWrap $w={68} $h={17}>
              <Combo $flat aria-label="Длительность"><option>176.7 мс</option></Combo>
            </ComboWrap>
            <Nav $w={17} aria-label="Увеличить"><ZoomDot plus color="#800000" /></Nav>
            <ComboWrap $w={65} $h={17}>
              <Combo $flat aria-label="Деление"><option>18</option></Combo>
            </ComboWrap>
            <Nav aria-label="В начало"><NavIcon kind="first" /></Nav>
            <Nav $w={17} aria-label="Назад"><NavIcon kind="smallBack" /></Nav>
            <Track>
              <span />
              <Nav $w={17} aria-label="Бегунок" />
            </Track>
            <Nav $w={17} aria-label="Вперёд"><NavIcon kind="small" /></Nav>
            <Nav aria-label="В конец"><NavIcon kind="last" /></Nav>
            <Nav $w={17} aria-label="Добавить"><ZoomDot plus color="#008000" /></Nav>
            <Nav aria-label="Первый кадр"><NavIcon kind="first" /></Nav>
            <Nav aria-label="Предыдущий кадр"><NavIcon kind="back" /></Nav>
            <PageNo>1</PageNo>
            <Nav aria-label="Следующий кадр"><NavIcon kind="play" /></Nav>
            <Nav aria-label="Последний кадр"><NavIcon kind="last" /></Nav>
            <Nav aria-label="Пуск кадра"><NavIcon kind="play" color="#008000" /></Nav>
            <Nav aria-label="Воспроизвести"><NavIcon kind="play" color="#0000e0" /></Nav>
          </ScrollRow>

          <Splitter>
            <SplitArrow />
            <SplitDots />
            <SplitArrow />
          </Splitter>

          <Deck>
            <Group $w={303}>
              <Row $top>
                <ChannelSide>
                  <Channels $gap={1}>
                    {["1", "2", "3", "4", "5", "6", "D"].map((c) => (
                      <Channel key={c} $state={c === "1" ? "on" : c === "4" ? "sel" : "off"}>{c}</Channel>
                    ))}
                  </Channels>
                  <Row $gap={3}>
                    <SensorBox>
                      <SensorInput aria-label="Датчик" defaultValue="ДД7Bar+удл" />
                      <Small>...</Small>
                    </SensorBox>
                    {icons.swap}
                  </Row>
                  <Row>
                    <Tool aria-label="Видимость" $pressed>{icons.eye}</Tool>
                    <Tool aria-label="Фильтр" $pressed>{icons.noise}</Tool>
                    <Tool aria-label="Инверсия">{icons.updown}</Tool>
                    <Tool aria-label="Линии" $pressed>{icons.lines}</Tool>
                    <Tool aria-label="Функция">{icons.fx}</Tool>
                    <Tool aria-label="Настройка">{icons.tools}</Tool>
                  </Row>
                </ChannelSide>
                <Knob
                  id="volt"
                  w={90}
                  cx={42}
                  value="5В"
                  ticks={50}
                  mark={27}
                  labels={[
                    ["0.1В", 1, 66, 140], ["1В", 6, 38, 192], ["10В", 17, 21, 232],
                    ["100В", 50, 18, 286], ["200В", 66, 35, 342], ["500В", 62, 66, 38],
                  ]}
                />
              </Row>
            </Group>

            <Group $w={105}>
              <Title $c="#000060">Частота</Title>
              <Knob
                id="freq"
                w={103}
                cx={50}
                value="50K"
                ticks={18}
                mark={35}
                labels={[
                  ["1K", 17, 66, 140], ["100K", 11, 26, 228], ["250K", 45, 16, 274],
                  ["333K", 67, 26, 308], ["500K", 75, 38, 340], ["1M", 70, 66, 38],
                ]}
              />
            </Group>

            <Group $w={125}>
              <Title $c="#707070">Синхронизация</Title>
              <SyncGrid>
                <Tool disabled aria-label="По уровню">{icons.trigWave}</Tool>
                <Tool disabled aria-label="По фронту">{icons.trigRise}</Tool>
                <Tool disabled aria-label="По спаду" $pressed>{icons.trigFall}</Tool>
                <Tool disabled aria-label="Вручную">{icons.trigHand}</Tool>
                <SyncCombo $w={47} $h={22} $muted>
                  <Combo $muted disabled aria-label="Канал"><option>1</option></Combo>
                </SyncCombo>
                <Tool disabled aria-label="Зазор">{icons.trigGap}</Tool>
                <Tool disabled aria-label="Сжать" $pressed>{icons.trigIn}</Tool>
              </SyncGrid>
            </Group>

            <Group $w={175}>
              <Title $c="#9ab4cc">Управление</Title>
              <ControlGrid>
                <Cmd $tone="off" aria-label="Пауза">{icons.pause}</Cmd>
                <Cmd aria-label="Синус">{icons.sine}</Cmd>
                <Cmd $tone="red" aria-label="Развёртка">{icons.traces}</Cmd>
                <Cmd aria-label="Автомасштаб">{icons.autoDial}</Cmd>
                <StartCmd>
                  <Ico w={12} h={20}><path d="M1 1v18l10-9z" fill="#20e020" stroke="#10a010" /></Ico>
                  Пуск
                </StartCmd>
                <Rate>33.78</Rate>
                <Cmd aria-label="Автосинхронизация">{icons.autoSync}</Cmd>
              </ControlGrid>
            </Group>

            <Group $w={67}>
              <Title $c="#000060">Таймеры</Title>
              <Timers>
                <TimerCmd $tone="gray" aria-label="Таймер начала">
                  {icons.timerIn}
                  <Ico w={7} h={4}><path d="M0 0h7L3.500 4z" fill="#000" /></Ico>
                </TimerCmd>
                <TimerCmd $tone="gray" aria-label="Таймер конца">
                  {icons.timerOut}
                  <Ico w={7} h={4}><path d="M0 0h7L3.500 4z" fill="#000" /></Ico>
                </TimerCmd>
              </Timers>
            </Group>
          </Deck>

          <Status>
            <StatusCell $w={190}>USB Осциллограф не подключен</StatusCell>
            <StatusCell $grow />
            <StatusCell $w={48} $line>1.9.1</StatusCell>
          </Status>
        </Frame>
      </Page>
    </>
  );
}
